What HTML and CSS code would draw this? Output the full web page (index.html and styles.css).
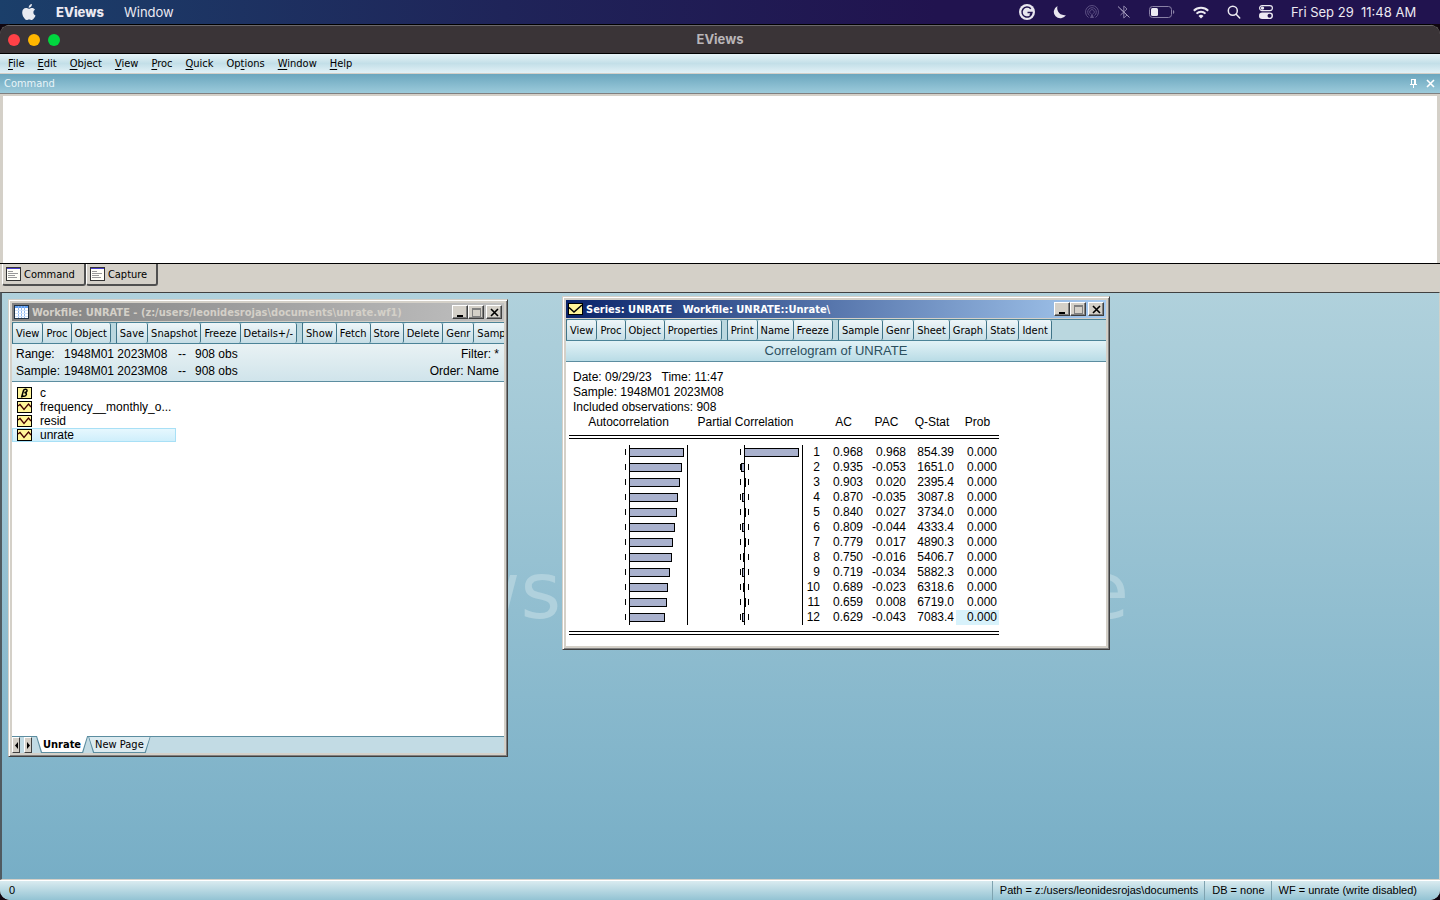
FILE: index.html
```html
<!DOCTYPE html>
<html lang="en">
<head>
  <meta charset="UTF-8">
  <meta name="viewport" content="width=device-width, initial-scale=1.0">
  <title>EViews</title>
  <link rel="stylesheet" href="styles.css">
</head>
<body>
  <header class="mac-bar">
    <svg class="apple" width="14" height="17" viewBox="0 0 14 17"><path fill="#e8eaf0" d="M9.9 0c.1 1.100-.3 2-.9 2.700-.6.700-1.400 1.100-2.300 1.100-.1-1 .3-1.900.9-2.600C8.200.5 9.100.1 9.900 0zM13 5.700c-1 .6-1.600 1.500-1.600 2.700 0 1.400.8 2.500 2.100 3-.3.900-.8 1.900-1.400 2.700-.7 1-1.400 1.900-2.400 1.900s-1.300-.6-2.500-.6-1.600.6-2.500.6c-1 0-1.800-1-2.500-2C.8 12.200.2 10.300.2 8.500c0-2.800 1.800-4.400 3.700-4.400 1.200 0 2.100.7 2.900.7.700 0 1.800-.8 3.200-.8 1.200 0 2.300.6 3 1.700z"/></svg>
    <button class="app-name">EViews</button>
    <button>Window</button>
    <div class="status-icons">
      <svg width="16" height="16" viewBox="0 0 16 16"><circle cx="8" cy="8" r="8" fill="#e8e6ef"/><path fill="none" stroke="#21134f" stroke-width="1.500" d="M11.800 4.800A5 5 0 1 0 13 8.500H8.500M13 8.500l-2 2.500"/></svg>
      <svg width="14" height="14" viewBox="0 0 14 14"><path fill="#e8e6ef" d="M4.500 1A6.500 6.500 0 1 0 13 10 7.200 7.200 0 0 1 4.500 1z"/></svg>
      <svg width="14" height="14" viewBox="0 0 14 14" fill="none" stroke="#5b4f82"><path d="M3.500 12.500a6.500 6.500 0 1 1 7 0M4.500 10.500a4.300 4.300 0 1 1 5 0M5.500 8.700a2.300 2.300 0 1 1 3 0"/><path fill="#5b4f82" d="M7 8l2 5H5z" stroke="none"/></svg>
      <svg width="14" height="14" viewBox="0 0 14 14" fill="none" stroke="#8a80a8"><path d="M3.500 4l6.500 6-3.200 3V1L10 4 3.500 10"/><path stroke="#aaa2c2" d="M1 1.500l11.500 11"/></svg>
      <svg width="26" height="12" viewBox="0 0 26 12"><rect x=".5" y=".5" width="22" height="11" rx="3" fill="none" stroke="#8a81a6"/><rect x="2" y="2" width="7" height="8" rx="1.500" fill="#eceaf2"/><path fill="#8a81a6" d="M24 4c1.800.6 1.800 3.400 0 4z"/></svg>
      <svg width="16" height="13" viewBox="0 0 16 13" fill="none" stroke="#eceaf2" stroke-width="2"><path d="M.8 4.700a10.300 10.300 0 0 1 14.400 0M3.500 7.600a6.500 6.500 0 0 1 9 0"/><path fill="#eceaf2" stroke="none" d="M8 12.500L5.500 10a3.500 3.500 0 0 1 5 0z"/></svg>
      <svg width="14" height="14" viewBox="0 0 14 14" fill="none" stroke="#eceaf2" stroke-width="1.500"><circle cx="5.800" cy="5.800" r="4.500"/><path stroke-linecap="round" d="M9.200 9.200l3.500 3.800"/></svg>
      <svg width="14" height="14" viewBox="0 0 14 14"><rect x=".6" y=".6" width="12.800" height="5" rx="2.500" fill="none" stroke="#eceaf2" stroke-width="1.200"/><circle cx="3.500" cy="3.100" r="1.700" fill="#eceaf2"/><rect y="7.500" width="14" height="6.500" rx="3.200" fill="#eceaf2"/><circle cx="10.500" cy="10.700" r="2" fill="#21134f"/></svg>
      <span class="clock">Fri Sep 29&nbsp; 11:48 AM</span>
    </div>
  </header>

  <main class="app">
    <div class="app-title">
      <div class="lights">
        <button class="light red" aria-label="Close"></button>
        <button class="light yellow" aria-label="Minimize"></button>
        <button class="light green" aria-label="Zoom"></button>
      </div>
      <h1>EViews</h1>
    </div>

    <nav class="menu">
      <button><u>F</u>ile</button>
      <button><u>E</u>dit</button>
      <button><u>O</u>bject</button>
      <button><u>V</u>iew</button>
      <button><u>P</u>roc</button>
      <button><u>Q</u>uick</button>
      <button>Op<u>t</u>ions</button>
      <button><u>W</u>indow</button>
      <button><u>H</u>elp</button>
    </nav>

    <section class="command">
      <div class="command-head">
        <label for="command-text">Command</label>
        <button aria-label="Pin"><svg width="9" height="9" viewBox="0 0 9 9" fill="none" stroke="#fff" shape-rendering="crispEdges"><path d="M2.500 5V.5h4V5M5.500 0v5M1 5.500h7M4.500 6v3"/></svg></button>
        <button aria-label="Close"><svg width="9" height="9" viewBox="0 0 9 9"><path stroke="#fff" stroke-width="1.600" d="M1 1l7 7M8 1L1 8"/></svg></button>
      </div>
      <textarea id="command-text"></textarea>
      <div class="command-tabs">
        <button class="active"><svg width="15" height="14" viewBox="0 0 15 14" shape-rendering="crispEdges"><path fill="#fffff8" stroke="#333" d="M.5.5h14v13H.5z"/><path stroke="#4a3fd0" d="M1 1.500h13"/><path stroke="#999" d="M2 4.500h5M2 6.500h10M2 8.500h7M2 10.500h9"/></svg>Command</button>
        <button><svg width="15" height="14" viewBox="0 0 15 14" shape-rendering="crispEdges"><path fill="#fffff8" stroke="#333" d="M.5.5h14v13H.5z"/><path stroke="#4a3fd0" d="M1 1.500h13"/><path stroke="#999" d="M2 4.500h5M2 6.500h10M2 8.500h7M2 10.500h9"/></svg>Capture</button>
      </div>
    </section>

    <section class="desktop">
      <div class="watermark"><span>EViews</span><span>Lite</span></div>

      <article class="window workfile">
        <div class="title-bar inactive">
          <svg width="15" height="14" viewBox="0 0 15 14" shape-rendering="crispEdges"><path fill="#fff" stroke="#234" d="M.5.5h14v13H.5z"/><path fill="#5c9cf0" d="M1 1h13v2H1z"/><path stroke="#8db8f2" d="M4.500 1v12M7.500 1v12M10.500 1v12"/><path stroke="#d4e4fa" d="M1 5.500h13M1 8.500h13M1 11.500h13"/></svg>
          <h2>Workfile: UNRATE - (z:/users/leonidesrojas\documents\unrate.wf1)</h2>
          <div class="window-buttons">
            <button aria-label="Minimize"><svg width="9" height="9" viewBox="0 0 9 9"><path d="M1 7h6v2H1z"/></svg></button>
            <button aria-label="Maximize"><svg width="9" height="9" viewBox="0 0 9 9" shape-rendering="crispEdges"><path fill="none" stroke="#808080" d="M.5.500h8v8h-8zM1 1.500h7"/></svg></button>
            <button aria-label="Close"><svg width="9" height="9" viewBox="0 0 9 9"><path stroke="#000" stroke-width="1.600" d="M1 1l7 7M8 1L1 8"/></svg></button>
          </div>
        </div>
        <div class="toolbar">
          <div class="group"><button>View</button><button>Proc</button><button>Object</button></div>
          <div class="group"><button>Save</button><button>Snapshot</button><button>Freeze</button><button>Details+/-</button></div>
          <div class="group"><button>Show</button><button>Fetch</button><button>Store</button><button>Delete</button><button>Genr</button><button>Sample</button></div>
        </div>
        <div class="info">
          <span>Range:</span><span>1948M01 2023M08</span><span>--</span><span>908 obs</span><span class="right">Filter: *</span>
          <span>Sample:</span><span>1948M01 2023M08</span><span>--</span><span>908 obs</span><span class="right">Order: Name</span>
        </div>
        <ul class="objects">
          <li><svg width="15" height="12" viewBox="0 0 15 12"><rect x=".5" y=".5" width="14" height="11" fill="#fff59a" stroke="#000"/><path fill="none" stroke="#000" stroke-width="1.500" d="M4.500 10.500l2-7C7 2 10.500 1.800 10 4c-.3 1.200-1.500 1.600-2.700 1.600 3.500 0 2.200 3.700-.2 3.700-.8 0-1.500-.4-1.600-1"/></svg>c</li>
          <li><svg width="15" height="12" viewBox="0 0 15 12"><rect x=".5" y=".5" width="14" height="11" fill="#fff59a" stroke="#000"/><path fill="none" stroke="#400" stroke-width="1.300" d="M1 5l2-1.500 4 5L11.500 3 14 6"/></svg>frequency__monthly_o...</li>
          <li><svg width="15" height="12" viewBox="0 0 15 12"><rect x=".5" y=".5" width="14" height="11" fill="#fff59a" stroke="#000"/><path fill="none" stroke="#400" stroke-width="1.300" d="M1 5l2-1.500 4 5L11.500 3 14 6"/></svg>resid</li>
          <li class="selected"><svg width="15" height="12" viewBox="0 0 15 12"><rect x=".5" y=".5" width="14" height="11" fill="#fff59a" stroke="#000"/><path fill="none" stroke="#400" stroke-width="1.300" d="M1 5l2-1.500 4 5L11.500 3 14 6"/></svg>unrate</li>
        </ul>
        <div class="pages">
          <button class="arrow" aria-label="Previous page"><svg width="3" height="7" viewBox="0 0 3 7"><path d="M3 0v7L0 3.500z"/></svg></button>
          <button class="arrow" aria-label="Next page"><svg width="3" height="7" viewBox="0 0 3 7"><path d="M0 0v7l3-3.500z"/></svg></button>
          <button class="page active">Unrate</button>
          <button class="page">New Page</button>
        </div>
      </article>

      <article class="window series">
        <div class="title-bar">
          <svg width="15" height="12" viewBox="0 0 15 12"><rect x=".5" y=".5" width="14" height="11" fill="#fff59a" stroke="#000"/><path fill="none" stroke="#000" stroke-width="1.500" d="M1 4.500l5 4.500 8-7"/></svg>
          <h2>Series: UNRATE &nbsp; Workfile: UNRATE::Unrate\</h2>
          <div class="window-buttons">
            <button aria-label="Minimize"><svg width="9" height="9" viewBox="0 0 9 9"><path d="M1 7h6v2H1z"/></svg></button>
            <button aria-label="Maximize"><svg width="9" height="9" viewBox="0 0 9 9" shape-rendering="crispEdges"><path fill="none" stroke="#808080" d="M.5.500h8v8h-8zM1 1.500h7"/></svg></button>
            <button aria-label="Close"><svg width="9" height="9" viewBox="0 0 9 9"><path stroke="#000" stroke-width="1.600" d="M1 1l7 7M8 1L1 8"/></svg></button>
          </div>
        </div>
        <div class="toolbar">
          <div class="group"><button>View</button><button>Proc</button><button>Object</button><button>Properties</button></div>
          <div class="group"><button>Print</button><button>Name</button><button>Freeze</button></div>
          <div class="group"><button>Sample</button><button>Genr</button><button>Sheet</button><button>Graph</button><button>Stats</button><button>Ident</button></div>
        </div>
        <h3 class="view-name">Correlogram of UNRATE</h3>
        <div class="output">
          <p>Date: 09/29/23 &nbsp; Time: 11:47</p>
          <p>Sample: 1948M01 2023M08</p>
          <p>Included observations: 908</p>
          <table>
            <colgroup><col class="acf"><col class="pacf"><col class="lag"><col class="num"><col class="num"><col class="stat"><col class="num"></colgroup>
            <thead>
              <tr><th>Autocorrelation</th><th>Partial Correlation</th><th></th><th>AC</th><th>PAC</th><th>Q-Stat</th><th>Prob</th></tr>
            </thead>
            <tbody id="rows"></tbody>
          </table>
        </div>
      </article>
    </section>

    <footer class="status">
      <span class="ready">0</span>
      <span>Path = z:/users/leonidesrojas\documents</span>
      <span>DB = none</span>
      <span>WF = unrate (write disabled)</span>
    </footer>
  </main>

  <script>
    // AC, PAC, Q-Stat, Prob for each lag
    const lags = [
      ['0.968', '0.968', '854.39', '0.000'],
      ['0.935', '-0.053', '1651.0', '0.000'],
      ['0.903', '0.020', '2395.4', '0.000'],
      ['0.870', '-0.035', '3087.8', '0.000'],
      ['0.840', '0.027', '3734.0', '0.000'],
      ['0.809', '-0.044', '4333.4', '0.000'],
      ['0.779', '0.017', '4890.3', '0.000'],
      ['0.750', '-0.016', '5406.7', '0.000'],
      ['0.719', '-0.034', '5882.3', '0.000'],
      ['0.689', '-0.023', '6318.6', '0.000'],
      ['0.659', '0.008', '6719.0', '0.000'],
      ['0.629', '-0.043', '7083.4', '0.000']
    ];

    function plot(value) {
      const width = Math.max(1, Math.floor(Math.abs(value) * 56 + 0.1));
      const x = value < 0 ? 56.5 - width : 56.5;
      return `<svg class="plot" width="115" height="15" viewBox="0 0 115 15">
        <path d="M52.5 4v6M60.5 4v6"/>
        <rect x="${x}" y="3.5" width="${width}" height="8"/>
        <path d="M56.5 0v15M114.5 0v15"/>
      </svg>`;
    }

    document.getElementById('rows').innerHTML = lags.map((row, i) =>
      `<tr><td>${plot(row[0])}</td><td>${plot(row[1])}</td><td>${i + 1}</td>` +
      row.map(value => `<td>${value}</td>`).join('') + '</tr>'
    ).join('');
  </script>
</body>
</html>
```
FILE: styles.css
```css
* {
  box-sizing: border-box;
}
body {
  margin: 0;
  height: 100vh;
  display: flex;
  flex-direction: column;
  overflow: hidden;
  background: #10060f;
  color: #000;
  font-family: "DejaVu Sans Condensed", "DejaVu Sans", sans-serif;
  font-size: 11px;
}
h1, h2, h3, p, ul {
  margin: 0;
  padding: 0;
}
button {
  margin: 0;
  padding: 0;
  border: none;
  background: none;
  color: inherit;
  font: inherit;
  white-space: nowrap;
}
svg {
  display: block;
  flex: none;
}

/* system menu bar */
.mac-bar {
  display: flex;
  align-items: center;
  height: 24px;
  padding: 0 19px 0 22px;
  background: linear-gradient(90deg, #1b3f6a, #1f2459 35%, #21134f 65%, #21134f);
  color: #eceaf2;
  font-family: Inter, sans-serif;
  font-size: 13px;
}
.mac-bar button {
  margin-left: 20px;
}
.mac-bar .app-name {
  font-weight: 800;
}
.status-icons {
  display: flex;
  align-items: center;
  gap: 18px;
  margin-left: auto;
}
.clock {
  min-width: 130px;
}

/* application frame */
.app {
  flex: 1;
  display: flex;
  flex-direction: column;
  min-height: 0;
  border-top: 1px solid #000;
  border-radius: 10px;
  overflow: hidden;
  background: #d4d0c8;
}
.app-title {
  display: grid;
  grid-template-columns: 1fr auto 1fr;
  align-items: center;
  height: 29px;
  padding: 0 8px;
  border-top: 1px solid #6b686b;
  border-bottom: 1px solid #000;
  background: #3a3437;
}
.app-title h1 {
  color: #b9b5b8;
  font: bold 13px/24px Inter, sans-serif;
  padding-bottom: 2px;
}
.lights {
  display: flex;
  gap: 8px;
}
.light {
  width: 12px;
  height: 12px;
  border-radius: 50%;
}
.red {
  background: #ff4147;
}
.yellow {
  background: #ffb700;
}
.green {
  background: #00d63f;
}
.menu {
  display: flex;
  align-items: center;
  gap: 13px;
  height: 19px;
  padding: 0 8px;
  background: linear-gradient(#e6f3f7, #c3dfe8 50%, #e2f1f6);
}
.menu u {
  text-underline-offset: 2px;
}

/* command pane */
.command-head {
  display: flex;
  align-items: center;
  gap: 8px;
  height: 21px;
  padding: 0 5px 0 4px;
  border-top: 1px solid #d4d0c8;
  border-bottom: 1px solid #808080;
  background: linear-gradient(#6ba6be, #9ccbdb);
  color: #e8f4f8;
}
.command-head label {
  flex: 1;
}
textarea {
  display: block;
  width: 100%;
  height: 169px;
  border: 3px solid #d4d0c8;
  border-top-width: 2px;
  border-bottom: none;
  background: #fff;
  outline: none;
  resize: none;
}
.command-tabs {
  display: flex;
  height: 29px;
  padding-left: 2px;
  border-top: 1px solid #000;
}
.command-tabs button {
  display: flex;
  align-items: center;
  gap: 3px;
  height: 22px;
  padding: 0 9px 0 3px;
  border-right: 2px solid #505050;
  border-bottom: 2px solid #505050;
  border-left: 1px solid #fff;
  border-radius: 0 0 3px 3px;
}

/* MDI desktop */
.desktop {
  flex: 1;
  position: relative;
  min-height: 0;
  overflow: hidden;
  border: 1px solid #d4d0c8;
  border-top: 1px solid #404040;
  border-left: 2px solid #505a60;
  background: linear-gradient(#b0d1dc, #77aec6);
}
.watermark {
  position: absolute;
  top: 248px;
  left: 284px;
  right: 310px;
  display: flex;
  justify-content: space-between;
  color: #b0d1dd;
  font: 78px/100px "DejaVu Sans", sans-serif;
}
.window {
  position: absolute;
  display: flex;
  flex-direction: column;
  padding: 3px;
  border: 1px solid;
  border-color: #d4d0c8 #404040 #404040 #d4d0c8;
  background: #d4d0c8;
  box-shadow: inset 1px 1px #fff, inset -1px -1px #808080;
}
.workfile {
  top: 6px;
  left: 6px;
  width: 500px;
  height: 458px;
}
.series {
  top: 3px;
  left: 560px;
  width: 548px;
  height: 354px;
}
.title-bar {
  display: flex;
  align-items: center;
  gap: 3px;
  height: 18px;
  flex: none;
  padding: 0 2px;
  background: linear-gradient(90deg, #0a246a, #a6caf0);
  color: #fff;
}
.title-bar.inactive {
  background: linear-gradient(90deg, #808080, #c0c0c0);
  color: #d4d0c8;
}
.title-bar h2 {
  flex: 1;
  font-size: 11px;
  white-space: nowrap;
}
.window-buttons {
  display: flex;
}
.window-buttons button {
  display: flex;
  align-items: center;
  justify-content: center;
  width: 16px;
  height: 14px;
  border: 1px solid;
  border-color: #fff #404040 #404040 #fff;
  background: #d4d0c8;
  box-shadow: inset -1px -1px #808080;
}
.window-buttons button:last-child {
  margin-left: 2px;
}
.toolbar {
  display: flex;
  gap: 5px;
  height: 22px;
  flex: none;
  margin-top: 1px;
  overflow: hidden;
  border-top: 1px solid #4b8397;
  border-bottom: 1px solid #4b8397;
  background: #bad7df;
}
.group {
  display: flex;
  border-left: 1px solid #3f7488;
}
.group button {
  padding: 0 3px;
  border-right: 1px solid #3f7488;
  border-radius: 2px;
  background: linear-gradient(#eef6f9, #c5dde5);
}
.info {
  display: grid;
  grid-template-columns: 48px 114px 17px auto 1fr;
  height: 38px;
  flex: none;
  padding: 2px 5px 1px 4px;
  border-bottom: 1px solid #5c8da0;
  background: linear-gradient(#e9f2f4, #d0e4eb);
  font: 12px/17px "Liberation Sans", Arial, sans-serif;
}
.info .right {
  text-align: right;
}
.objects {
  flex: 1;
  padding-top: 4px;
  background: #fff;
  list-style: none;
  font: 12px/14px "Liberation Sans", Arial, sans-serif;
}
.objects li {
  display: flex;
  align-items: center;
  gap: 8px;
  width: 164px;
  height: 14px;
  padding-left: 5px;
}
.objects .selected {
  background: linear-gradient(#e8f8fe, #cdeefb);
  box-shadow: inset 0 0 0 1px #a8e0f6;
}
.pages {
  display: flex;
  height: 17px;
  border-top: 1px solid #5c8da0;
  background: #c2dbe4;
}
.arrow {
  display: flex;
  align-items: center;
  justify-content: center;
  width: 8px;
  margin-right: 4px;
  border: 1px solid;
  border-color: #fff #404040 #404040 #fff;
  background: #d4d0c8;
}
.page {
  position: relative;
  isolation: isolate;
  padding: 0 7px 2px;
}
.page::before,
.page::after {
  content: "";
  position: absolute;
  inset: -1px 0 0;
  z-index: -1;
  background: #5c8da0;
  clip-path: polygon(0 0, 100% 0, calc(100% - 5px) 100%, 5px 100%);
}
.page::after {
  inset: 0 1px 1px;
  background: #dcebf0;
}
.page.active {
  font-weight: bold;
}
.page.active::after {
  top: -1px;
  background: #fff;
}

/* correlogram */
.view-name {
  height: 21px;
  flex: none;
  border-bottom: 1px solid #5c8da0;
  background: linear-gradient(#e2f2f6, #b9dce6);
  color: #2c4f5e;
  font: 13px/20px "Liberation Sans", Arial, sans-serif;
  text-align: center;
}
.output {
  flex: 1;
  padding: 8px 3px 0;
  background: #fff;
  font: 12px/15px "Liberation Sans", Arial, sans-serif;
}
.output p {
  padding-left: 4px;
}
table {
  width: 430px;
  table-layout: fixed;
  border-spacing: 0;
  border-bottom: 4px double #000;
}
.acf {
  width: 119px;
}
.pacf {
  width: 115px;
}
.lag {
  width: 19px;
}
.num {
  width: 43px;
}
.stat {
  width: 48px;
}
th {
  padding: 0 0 5px;
  border-bottom: 4px double #000;
  font-weight: normal;
  white-space: nowrap;
}
td {
  height: 15px;
  padding: 0 2px 0 0;
  text-align: right;
}
td:nth-child(-n+2) {
  padding: 0;
}
tbody::before,
tbody::after {
  content: "";
  display: block;
  height: 6px;
}
tbody tr:last-child td:last-child {
  background: #d8f2fb;
}
.plot {
  margin-left: auto;
  fill: #a9b1cd;
  stroke: #000;
  shape-rendering: crispEdges;
}

/* status bar */
.status {
  display: flex;
  height: 20px;
  flex: none;
  padding-right: 17px;
  border-top: 1px solid #fff;
  background: linear-gradient(#d9ebf0, #93c3d3);
  font: 11px/18px "Liberation Sans", Arial, sans-serif;
}
.status span {
  padding: 0 6px 0 7px;
  border-left: 1px solid #7fa3b0;
}
.status .ready {
  flex: 1;
  padding-left: 9px;
  border-left: none;
}
```
